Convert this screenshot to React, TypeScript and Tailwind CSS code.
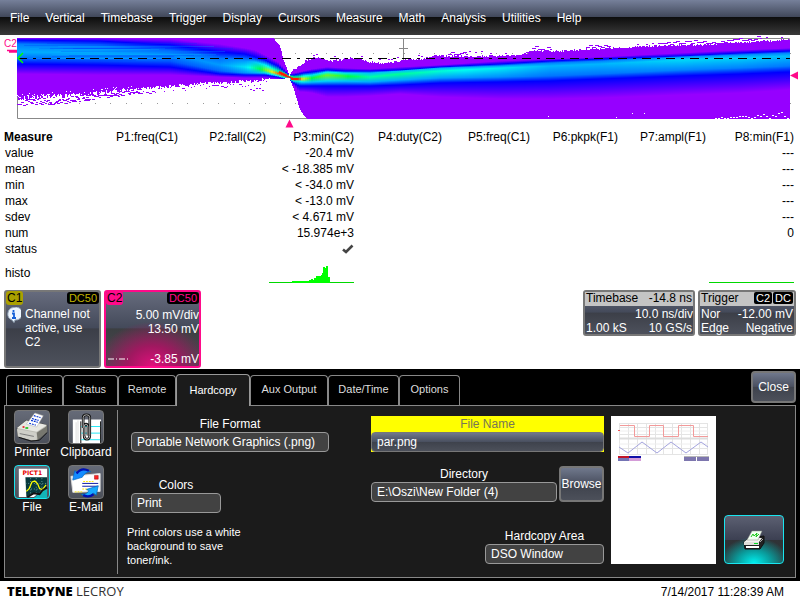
import React from "react";

const menus = ["File", "Vertical", "Timebase", "Trigger", "Display", "Cursors", "Measure", "Math", "Analysis", "Utilities", "Help"];

const tabs = [
  { name: "Utilities", width: "w-[57px]" },
  { name: "Status", width: "w-[55px]" },
  { name: "Remote", width: "w-[58px]" },
  { name: "Hardcopy", width: "w-[74px]" },
  { name: "Aux Output", width: "w-[78px]" },
  { name: "Date/Time", width: "w-[71px]" },
  { name: "Options", width: "w-[61px]" },
];

const columns = ["P1:freq(C1)", "P2:fall(C2)", "P3:min(C2)", "P4:duty(C2)", "P5:freq(C1)", "P6:pkpk(F1)", "P7:ampl(F1)", "P8:min(F1)"];

const rows: [string, string, string][] = [
  ["value", "-20.4 mV", "---"],
  ["mean", "< -18.385 mV", "---"],
  ["min", "< -34.0 mV", "---"],
  ["max", "< -13.0 mV", "---"],
  ["sdev", "< 4.671 mV", "---"],
  ["num", "15.974e+3", "0"],
];

/* Persistence map: x, seven heights through the band (purple, blue, light, core, light, blue, purple), core intensity */
const profile = [
  [17, 37, 40, 44, 52, 58, 64, 74, 0.6],
  [100, 38, 41, 46, 53, 59, 65, 75, 0.59],
  [170, 39, 45, 50, 54, 61, 67, 75, 0.53],
  [220, 44, 52, 58, 65, 71, 74, 77, 0.56],
  [245, 48, 54, 61, 67, 73, 75, 78, 0.68],
  [255, 50, 57, 62, 68, 73, 75, 78, 0.78],
  [265, 55, 60, 65, 70, 73, 75, 78, 0.88],
  [278, 62, 66, 71, 73.5, 76, 77, 79, 0.97],
  [284, 68, 71, 73, 75, 77.5, 79, 80, 1],
  [289, 74, 75, 75.5, 77, 79, 80, 81, 1],
  [294, 73, 75, 77, 79, 81, 83, 86, 1],
  [299, 72, 74, 77, 79, 81, 86, 92, 1],
  [303, 71, 73, 76, 79, 82, 86, 92, 0.92],
  [312, 69, 72, 75, 78, 82, 86, 93, 0.84],
  [327, 67, 70, 72, 75, 81, 86, 97, 0.88],
  [345, 68, 71, 73, 76, 81, 86, 97, 0.85],
  [370, 69, 71, 73, 77, 82, 86, 96, 0.77],
  [400, 67, 70, 71, 74, 80, 85, 94, 0.78],
  [440, 65, 67, 68, 71, 78, 83, 97, 0.74],
  [500, 61, 64, 66, 68, 77, 82, 99, 0.69],
  [550, 59, 61, 63, 66, 76, 81, 99, 0.61],
  [600, 57, 59, 61, 64, 74, 79, 98, 0.61],
  [680, 53, 56, 57, 60, 70, 76, 95, 0.66],
  [740, 50, 53, 55, 58, 68, 74, 93, 0.65],
  [790, 48, 51, 53, 56, 66, 72, 90, 0.62],
];

const ramp: [number, number, number, number][] = [
  [0, 150, 0, 255],
  [0.25, 0, 0, 255],
  [0.45, 0, 100, 255],
  [0.6, 0, 175, 255],
  [0.72, 0, 255, 240],
  [0.84, 0, 255, 60],
  [0.93, 250, 240, 0],
  [1, 255, 10, 0],
];

function heat(v: number) {
  let i = 0;
  while (i < ramp.length - 2 && v > ramp[i + 1][0]) i++;
  const a = ramp[i];
  const b = ramp[i + 1];
  const t = Math.min(1, Math.max(0, (v - a[0]) / (b[0] - a[0])));
  const c = [1, 2, 3].map((k) => Math.round(a[k] + (b[k] - a[k]) * t));
  return `rgb(${c.join(",")})`;
}

function sample(table: number[][], x: number) {
  let i = 0;
  while (i < table.length - 2 && x > table[i + 1][0]) i++;
  const a = table[i];
  const b = table[i + 1];
  const t = Math.min(1, Math.max(0, (x - a[0]) / (b[0] - a[0])));
  return a.map((n, k) => n + (b[k] - n) * t);
}

let seed = 7;
function noise() {
  seed = (seed * 16807) % 2147483647;
  return seed / 2147483647;
}

const topEdge = [[17, 38], [273, 38], [276, 42], [279, 45], [281, 51], [283, 60], [286, 67], [289, 76], [292, 70], [296, 68], [301, 65], [305, 61], [310, 59], [313, 57], [320, 58], [330, 61], [340, 60], [350, 58], [357, 58], [368, 62], [380, 63], [395, 62], [405, 60], [420, 59], [435, 56], [470, 56], [490, 56], [520, 55], [535, 51], [560, 51], [590, 49], [620, 48], [650, 46], [680, 45], [700, 45], [730, 43], [760, 41], [790, 40]];
const bottomEdge = [[17, 98], [40, 97], [60, 96], [90, 94], [110, 92], [130, 90], [150, 88], [170, 86], [185, 85], [200, 83], [230, 83], [240, 81], [255, 81], [268, 79], [280, 79], [289, 78], [293, 88], [296, 98], [299, 108], [303, 115], [307, 119], [790, 119]];

function buildOutline() {
  const upper: string[] = [];
  const lower: string[] = [];
  for (let x = 17; x < 790; x++) {
    const amp = x < 292 ? 0 : 2;
    const y = Math.round(sample(topEdge, x)[1] + (noise() - 0.5) * amp);
    upper.push(`${x},${y} ${x + 1},${y}`);
  }
  for (let x = 789; x >= 17; x--) {
    const amp = x < 130 ? 5 : x < 270 ? 3 : 0;
    const y = Math.round(sample(bottomEdge, x)[1] + (noise() - 0.5) * amp);
    lower.push(`${x + 1},${y} ${x},${y}`);
  }
  return upper.concat(lower).join(" ");
}

function buildSpecks() {
  const out: { x: number; y: number; w: number; white: boolean }[] = [];
  for (let x = 17; x < 140; x += 1) {
    const depth = 9 - (x - 17) / 25;
    const y = sample(bottomEdge, x)[1];
    out.push({ x, y: Math.round(y + noise() * depth), w: noise() > 0.5 ? 3 : 2, white: false });
    if (noise() > 0.7) out.push({ x, y: Math.round(y - noise() * 5), w: 1, white: true });
  }
  for (let x = 140; x < 268; x += 3) {
    out.push({ x, y: Math.round(sample(bottomEdge, x)[1] + noise() * 5), w: noise() > 0.6 ? 3 : 1, white: false });
  }
  for (let x = 250; x < 264; x += 3) out.push({ x, y: Math.round(87 + noise() * 4), w: 2, white: false });
  for (let x = 310; x < 786; x += 3) {
    const busy = (x > 445 && x < 465) || (x > 525 && x < 550) || (x > 585 && x < 610) || (x > 655 && x < 760);
    if (busy || noise() > 0.75) out.push({ x, y: Math.round(sample(topEdge, x)[1] - 1 - noise() * 4), w: busy ? 4 : 2, white: false });
  }
  for (let x = 715; x < 788; x += 3) out.push({ x, y: Math.round(118 - noise() * (x - 705) / 12), w: 2, white: true });
  [[548, 116], [632, 113], [644, 113], [616, 117]].forEach(([x, y]) => out.push({ x, y, w: 1, white: true }));
  return out;
}

const outline = buildOutline();
const specks = buildSpecks();
const strips = Array.from({ length: 387 }, (_, i) => 17 + i * 2);
const streaks = Array.from({ length: 22 }, () => ({ x: 17 + noise() * 60, y: Math.round(43 + noise() * 17), w: 80 + noise() * 90, light: noise() > 0.5 }));
const dots = Array.from({ length: 50 }, (_, i) => Math.round(33 + i * 15.44));

function Waveform() {
  return (
    <svg viewBox="0 35 800 94" className="block w-full" role="img" aria-label="C2 waveform">
      <defs>
        {strips.map((x) => {
          const p = sample(profile, x + 1);
          const values = [0, 0.25, 0.25 + (p[8] - 0.25) * 0.72, p[8], 0.25 + (p[8] - 0.25) * 0.65, 0.25, 0];
          return (
            <linearGradient key={x} id={`strip${x}`} gradientUnits="userSpaceOnUse" x1="0" x2="0" y1="38" y2="119">
              {values.map((v, k) => (
                <stop key={k} offset={(p[k + 1] - 38) / 81} stopColor={heat(v)} />
              ))}
            </linearGradient>
          );
        })}
        <clipPath id="outline"><polygon points={outline} /></clipPath>
      </defs>
      <path d="M17.5 38.5H789.5V118.5H17.5Z" fill="#fff" stroke="#888" />
      {dots.map((x) => (
        <g key={x} fill="#999"><rect x={x} y="53" width="1" height="1" /><rect x={x} y="103" width="1" height="1" /></g>
      ))}
      <path d="M403.5 38V60M399 48.5H408" stroke="#888" />
      <g clipPath="url(#outline)" shapeRendering="crispEdges">
        {strips.map((x) => <rect key={x} x={x} y="38" width="2" height="81" fill={`url(#strip${x})`} />)}
        {streaks.map((s, i) => <rect key={i} x={s.x} y={s.y} width={s.w} height="1" fill={s.light ? "#00b0ff" : "#0030ff"} opacity="0.25" />)}
      </g>
      <path d="M279 72L287 76M291 79H298" stroke="#ff1a00" strokeWidth="2" />
      <g shapeRendering="crispEdges">
        {specks.map((s, i) => <rect key={i} x={s.x} y={s.y} width={s.w} height="1" fill={s.white ? "#fff" : "#9600ff"} />)}
      </g>
      <path d="M18 58.5H790" stroke="#000" strokeDasharray="9 6 3 6" />
      <path d="M23 53L18 58L23 63" fill="none" stroke="#0f0" strokeWidth="1.5" />
      <text x="4" y="47" fill="#ff0a8a" fontSize="10" fontFamily="Liberation Sans, sans-serif">C2</text>
      <path d="M7 50.5H17M9 52H17" stroke="#ff0a8a" strokeWidth="1.5" />
      <path d="M289.5 119.5L293.5 127.5H285.5Z" fill="#ff0a8a" />
      <path d="M790 75.5L798 71.5V79.5Z" fill="#ff0a8a" />
    </svg>
  );
}

function PrinterIcon() {
  return (
    <svg viewBox="0 0 36 34" className="block h-full w-full" aria-hidden="true">
      <path d="M2 18L12 10L34 15V22L24 31H17L3 27Z" fill="#bdbdb5" stroke="#444" />
      <path d="M2 18L12 10L34 15L23 22Z" fill="#e8e8e2" />
      <path d="M2 19L23 23V31H17L3 27Z" fill="#cfcfc8" />
      <path d="M23 23L34 16V22L24 31Z" fill="#77776f" />
      <path d="M12 14L21 2L30 5L23 17Z" fill="#fff" stroke="#aaa" strokeWidth=".5" />
      <path d="M20 5L27 7M18 8L25 10M17 10L24 12M15 13L22 15" stroke="#0030d0" strokeWidth="1.3" strokeDasharray="2 1" />
      <path d="M5 24L20 27" stroke="#777" />
      <path d="M8 17H10" stroke="#e00" strokeWidth="1.5" /><path d="M11 18H14" stroke="#0b0" strokeWidth="1.5" />
      <path d="M4 28L17 32L26 31L34 23" fill="none" stroke="#111" />
    </svg>
  );
}

function ClipboardIcon() {
  return (
    <svg viewBox="0 0 36 34" className="block h-full w-full" aria-hidden="true">
      <path d="M4 9H34V34H4Z" fill="#fff" />
      <path d="M7.5 12V34M9.5 10V34" stroke="#ddd" />
      <path d="M12.5 11V34M33.5 11V34" stroke="#000" />
      <path d="M13 16.5H33M13 23.5H33M13 30.5H33" stroke="#19e6f5" />
      <path d="M15 18V7Q15 4 18.5 4Q22 4 22 7V26Q22 30 19 30Q16 30 16 26V17Q16 14 18 14Q20 14 20 17V26" fill="none" stroke="#111" strokeWidth="2.8" />
      <path d="M15 18V7Q15 4 18.5 4Q22 4 22 7V26Q22 30 19 30Q16 30 16 26V17Q16 14 18 14Q20 14 20 17V26" fill="none" stroke="#b8b8b8" />
    </svg>
  );
}

function FileIcon() {
  return (
    <svg viewBox="0 0 36 34" className="block h-full w-full" aria-hidden="true">
      <path d="M20 34L34 22V34Z" fill="#12b4b8" />
      <path d="M4 3H34V22L28 26L20 33H4Z" fill="#fff" />
      <path d="M11 12H34V23L28 25L25 30L19 29L12 33Z" fill="#07383b" />
      <path d="M11 18.5H34M11 24.5H29M16.5 13V31M22.5 13V30M28.5 13V25" stroke="#9cc" strokeWidth=".7" strokeDasharray="1 2" />
      <path d="M12 27L15 24L18 17L21 16L24 19L26 24L29 25L33 20" fill="none" stroke="#ff0" strokeWidth="1.3" />
      <path d="M13 33L20 29L26 30L29 26L34 23" fill="none" stroke="#111" strokeWidth="2" />
      <text x="8" y="10" fill="#e60000" fontSize="6.5" fontWeight="bold" fontFamily="DejaVu Sans, sans-serif">PICT1</text>
    </svg>
  );
}

function MailIcon() {
  return (
    <svg viewBox="0 0 36 34" className="block h-full w-full" aria-hidden="true">
      <path d="M2 11L33 8V27L4 28Z" fill="#fff" stroke="#ddd" />
      <path d="M27 10h4v4h-4z" fill="#f22" stroke="#900" strokeWidth=".5" />
      <path d="M14 18.500H31M14 21.500H31" stroke="#0010a0" />
      <path d="M4 14L6 5L9 7Q14 0 23 6Q17 6 14 12L4 15Z" fill="#148cff" stroke="#06b" strokeWidth=".7" />
      <path d="M8 8Q13 1 21 5" fill="none" stroke="#0010b0" strokeWidth="2.5" />
      <path d="M31 21L29 31L26 29Q20 36 13 30Q20 30 21 26L18 25Z" fill="#18aaff" stroke="#06b" strokeWidth=".7" />
      <path d="M26 30Q21 34 15 31" fill="none" stroke="#0010b0" strokeWidth="2.5" />
      <path d="M14 24.5H20M6 27.500H14M15 16.500H26" stroke="#ffe600" strokeDasharray="2 1" />
    </svg>
  );
}

function PrintNowIcon() {
  return (
    <svg viewBox="0 0 24 20" className="h-5 w-6" aria-hidden="true">
      <path d="M2 12L7 8L22 6V13L18 19H3Z" fill="#222" stroke="#111" />
      <path d="M2 12L7 8H20L17 12Z" fill="#f2f2ee" />
      <path d="M5 10L10 1H20L16 10Z" fill="#f0fff0" stroke="#888" strokeWidth=".5" />
      <path d="M9 7L11 4L12 6L15 3L14 7L17 4" fill="none" stroke="#1ac81a" />
      <path d="M2 12H17V15H2Z" fill="#deded8" /><path d="M4 16H17V18H4Z" fill="#fff" />
      <path d="M12 13.5H16" stroke="#0d2" />
      <path d="M18 12L21 9" stroke="#aaa" />
    </svg>
  );
}

const tools = [
  { name: "Printer", Icon: PrinterIcon, active: false },
  { name: "Clipboard", Icon: ClipboardIcon, active: false },
  { name: "File", Icon: FileIcon, active: true },
  { name: "E-Mail", Icon: MailIcon, active: false },
];

function Preview() {
  return (
    <svg viewBox="0 0 105 148" className="h-[148px] w-[105px] shrink-0 bg-white" role="img" aria-label="Print preview">
      <g stroke="#e4e4e4" fill="none">
        <path d="M8.5 7.5H97M8.5 11.5H97M8.5 18.5H97M8.5 38.5H97M8.5 32.5H97" />
        <path d="M8.5 7V39M17.5 7V39M26.5 7V39M35.5 7V39M44.5 7V39M52.5 7V39M61.5 7V39M70.5 7V39M79.5 7V39M88.5 7V39M96.5 7V39" />
      </g>
      <path d="M8 15H97M8 28H97" stroke="#eee" />
      <path d="M8 22.5H97" stroke="#ddd" strokeWidth="2" />
      <path d="M9 9.5H23.5V20.5H38.5V9.5H52.5V20.5H67.5V9.5H82.5V20.5H97" fill="none" stroke="#f29a9a" />
      <path d="M8 31L17 37L31 26L46 37L60 26L75 37L90 26L97 31" fill="none" stroke="#a4a4de" />
      <rect x="7" y="14" width="2" height="1" fill="#e55" />
      <rect x="7" y="40" width="11" height="5" fill="#7474b4" /><rect x="7" y="40" width="11" height="2" fill="#c01428" />
      <rect x="18" y="40" width="12" height="5" fill="#d49cd8" /><rect x="18" y="40" width="12" height="2" fill="#1010a8" />
      <rect x="73" y="40" width="12" height="5" fill="#7d76ae" /><rect x="86" y="40" width="12" height="5" fill="#7d76ae" />
      <path d="M73 40.5H98" stroke="#b8b8b8" />
    </svg>
  );
}

const field = "block h-5 w-full appearance-none truncate rounded-[4px] border border-[#999] bg-[#424242] px-[5px] text-[12px] leading-4 text-white outline-none";
const steel = "bg-[linear-gradient(#666b7d,#444a5a_48%,#3c3f48_50%,#4d515c)]";
const steelButton = "bg-[linear-gradient(#70788c,#4a5060_48%,#3e424c_50%,#4c505a)]";

export default function App() {
  return (
    <div className="flex min-h-screen flex-col bg-white font-['Liberation_Sans',Arial,sans-serif] text-[12px] text-black">
      <nav className="flex h-[35px] items-center gap-4 bg-[linear-gradient(#76809a,#41485a_48%,#0d0d0d_49%,#3a3a3a)] pl-[10px] text-[12px] text-white">
        {menus.map((m) => <button key={m} type="button">{m}</button>)}
      </nav>

      <Waveform />

      <div className="pr-[6px]">
        <table className="w-full table-fixed border-collapse text-right text-[12px] leading-4">
          <thead>
            <tr className="h-4">
              <th className="w-[90px] pl-1 text-left font-bold">Measure</th>
              {columns.map((c) => <th key={c} className="font-normal whitespace-nowrap">{c}</th>)}
            </tr>
          </thead>
          <tbody>
            {rows.map(([label, p3, p8]) => (
              <tr key={label} className="h-4">
                <th className="pl-[5px] text-left font-normal">{label}</th>
                <td /><td />
                <td className="whitespace-nowrap">{p3}</td>
                <td /><td /><td /><td />
                <td>{p8}</td>
              </tr>
            ))}
            <tr className="h-4">
              <th className="pl-[5px] text-left font-normal">status</th>
              <td /><td />
              <td>
                <svg viewBox="0 0 12 10" className="ml-auto h-[10px] w-3" role="img" aria-label="OK"><path d="M1 5.5L4 8L10.5 1.5" fill="none" stroke="#444" strokeWidth="2.6" /></svg>
              </td>
              <td /><td /><td /><td /><td />
            </tr>
            <tr className="h-8">
              <th className="pl-[5px] text-left font-normal">histo</th>
              <td /><td />
              <td className="align-bottom">
                <svg viewBox="0 0 85 18" className="mb-[6px] ml-auto h-[18px] w-[85px]" shapeRendering="crispEdges" aria-hidden="true">
                  <rect y="17" width="85" height="1" fill="#00d800" />
                  <path d="M23 18V16H40V15H42V14H44V15H45V13H47V11H52V10H53V8H54V2H56V3H57V1H59V12H61V18Z" fill="#00ff00" />
                </svg>
              </td>
              <td /><td /><td /><td />
              <td className="align-bottom">
                <svg viewBox="0 0 85 18" className="mb-[6px] ml-auto h-[18px] w-[85px]" shapeRendering="crispEdges" aria-hidden="true">
                  <rect y="17" width="85" height="1" fill="#00d800" />
                </svg>
              </td>
            </tr>
          </tbody>
        </table>
      </div>

      <div className="flex h-20 items-start pt-px pr-1 pl-1 text-white">
        <section className={`h-[78px] w-[97px] rounded-[3px] border-2 border-[#777] leading-[14px] ${steel}`}>
          <div className="flex h-3 items-center justify-between text-black">
            <span className="rounded-[3px] bg-[#aaa000] px-px">C1</span>
            <span className="rounded-[3px] bg-black px-[2px] text-[11px] leading-3 text-[#c0b400]">DC50</span>
          </div>
          <div className="flex gap-1 pt-[3px]">
            <svg viewBox="0 0 15 16" className="h-4 w-[15px] shrink-0" aria-hidden="true">
              <path d="M7.5 .5A6.5 6.5 0 1 1 9 13L8 15.5L6 13A6.5 6.5 0 0 1 7.5 .5Z" fill="#eef6ff" stroke="#9ab" />
              <path d="M7.5 3V5M6 6.5H8V11M6 11H10" fill="none" stroke="#1460d8" strokeWidth="1.8" />
            </svg>
            <p>Channel not active, use C2</p>
          </div>
        </section>
        <section className="ml-[3px] flex h-[78px] w-[97px] flex-col rounded-[3px] border-2 border-[#ff0a8a] bg-[radial-gradient(ellipse_60%_60%_at_50%_100%,#e0107c,#a01860_45%,transparent),linear-gradient(#666b7d,#444a5a_48%,#3c3f42_50%,#4a4a50)] text-right leading-[14px] whitespace-nowrap">
          <div className="flex h-3 items-center justify-between">
            <span className="rounded-[3px] bg-[#ff0a8a] px-px text-black">C2</span>
            <span className="rounded-[3px] bg-black px-[2px] text-[11px] leading-3 text-[#ff0a8a]">DC50</span>
          </div>
          <div className="pt-1">5.00 mV/div</div>
          <div>13.50 mV</div>
          <div className="mt-auto flex items-center justify-between">
            <svg viewBox="0 0 24 2" className="h-[2px] w-6" aria-hidden="true"><path d="M2 1H24" stroke="#fff" strokeDasharray="6 2 1 2" /></svg>
            <span>-3.85 mV</span>
          </div>
        </section>
        <section className={`ml-auto h-[46px] w-[112px] rounded-[3px] border-2 border-[#777] leading-[14px] whitespace-nowrap ${steel}`}>
          <div className="flex h-[14px] justify-between bg-[#c4c4c4] px-px leading-3 text-black"><span>Timebase</span><span>-14.8 ns</span></div>
          <div className="pt-px text-right">10.0 ns/div</div>
          <div className="flex justify-between px-px"><span>1.00 kS</span><span>10 GS/s</span></div>
        </section>
        <section className={`ml-[3px] h-[46px] w-[98px] rounded-[3px] border-2 border-[#777] leading-[14px] whitespace-nowrap ${steel}`}>
          <div className="flex h-[14px] items-start bg-[#c4c4c4] px-px leading-3 text-black">
            <span>Trigger</span>
            <span className="ml-auto rounded-[2px] bg-black px-[2px] text-[11px] text-white">C2</span>
            <span className="ml-px rounded-[2px] bg-black px-[2px] text-[11px] text-white">DC</span>
          </div>
          <div className="flex justify-between px-px pt-px"><span>Nor</span><span>-12.00 mV</span></div>
          <div className="flex justify-between px-px"><span>Edge</span><span>Negative</span></div>
        </section>
      </div>

      <main className="flex flex-col bg-black pr-1 pb-[3px] pl-1 text-white">
        <div className="flex h-9 items-end pl-[2px]" role="tablist">
          {tabs.map((t) => (
            <button
              key={t.name}
              type="button"
              role="tab"
              aria-selected={t.name === "Hardcopy"}
              className={`${t.width} rounded-t-[4px] border-t border-r border-l text-[11px] ${t.name === "Hardcopy" ? "relative -mb-px h-8 border-[#999] bg-[#1b1b1b] text-white" : "h-[30px] border-[#888] bg-black pb-[2px] text-[#ddd]"}`}
            >
              {t.name}
            </button>
          ))}
          <button type="button" className={`mb-[2px] ml-auto h-8 w-[45px] rounded-[4px] border-2 border-[#777] text-[12px] ${steelButton}`}>Close</button>
        </div>

        <div className="flex h-[173px] border border-[#888] bg-[#1b1b1b]">
          <div className="mt-1 mb-[3px] grid w-[113px] shrink-0 grid-cols-[54px_54px] content-start gap-y-[6px] border-r border-[#888]">
            {tools.map(({ name, Icon, active }) => (
              <button key={name} type="button" className="flex h-[49px] flex-col items-center leading-[14px]">
                <span className={`block h-[34px] w-9 shrink-0 overflow-hidden rounded-[4px] border bg-[linear-gradient(#666b78,#4c505a)] ${active ? "border-[#19e6f0]" : "border-[#777]"}`}><Icon /></span>
                <span className="pt-px">{name}</span>
              </button>
            ))}
          </div>

          <form className="flex min-w-0 grow pt-[10px] pl-[9px] leading-4">
            <div className="w-[202px] shrink-0 pl-1">
              <label htmlFor="format" className="block text-center">File Format</label>
              <select id="format" className={field}><option>Portable Network Graphics (.png)</option></select>
              <div className="mt-[25px] w-[90px]">
                <label htmlFor="colors" className="block text-center">Colors</label>
                <select id="colors" className={field}><option>Print</option></select>
              </div>
              <p className="-ml-1 mt-3 w-[130px] text-[11px] leading-[14px]">Print colors use a white background to save toner/ink.</p>
            </div>
            <div className="ml-auto w-[233px] shrink-0">
              <div className="bg-[#ffff00]">
                <label htmlFor="filename" className="block text-center text-[#777755]">File Name</label>
                <input id="filename" type="text" defaultValue="par.png" className={`block h-5 w-full rounded-[4px] border border-[#777] px-[5px] text-[12px] leading-4 text-white outline-none ${steelButton}`} />
              </div>
              <div className="mt-[14px] flex gap-[2px]">
                <div className="w-[186px]">
                  <label htmlFor="directory" className="block text-center">Directory</label>
                  <input id="directory" type="text" defaultValue="E:\Oszi\New Folder (4)" className={field} />
                </div>
                <button type="button" className={`h-9 w-[45px] rounded-[4px] border-2 border-[#777] text-center ${steelButton}`}><span className="-mx-1">Browse</span></button>
              </div>
              <div className="mt-[26px] ml-auto w-[119px]">
                <label htmlFor="area" className="block text-center">Hardcopy Area</label>
                <select id="area" className={field}><option>DSO Window</option></select>
              </div>
            </div>
            <div className="ml-[7px] flex shrink-0 gap-2 self-start pr-[11px]">
              <Preview />
              <button type="button" aria-label="Print now" className="flex h-[49px] w-[60px] items-center justify-center self-end rounded-[4px] border border-[#19e6f0] bg-[radial-gradient(ellipse_60%_55%_at_50%_100%,#00f0f0,#0a9a9a_50%,transparent),linear-gradient(#5c6072,#3c4052_50%,#303236_51%,#2a3a3c)]">
                <PrintNowIcon />
              </button>
            </div>
          </form>
        </div>
      </main>

      <footer className="flex h-[19px] items-center justify-between pr-4 pl-[7px]">
        <div className="font-['Open_Sans',sans-serif] text-[13px] leading-4 text-[#333]"><span className="font-extrabold text-black">TELEDYNE</span> LECROY</div>
        <time className="pt-[2px] leading-[14px]">7/14/2017 11:28:39 AM</time>
      </footer>
    </div>
  );
}
